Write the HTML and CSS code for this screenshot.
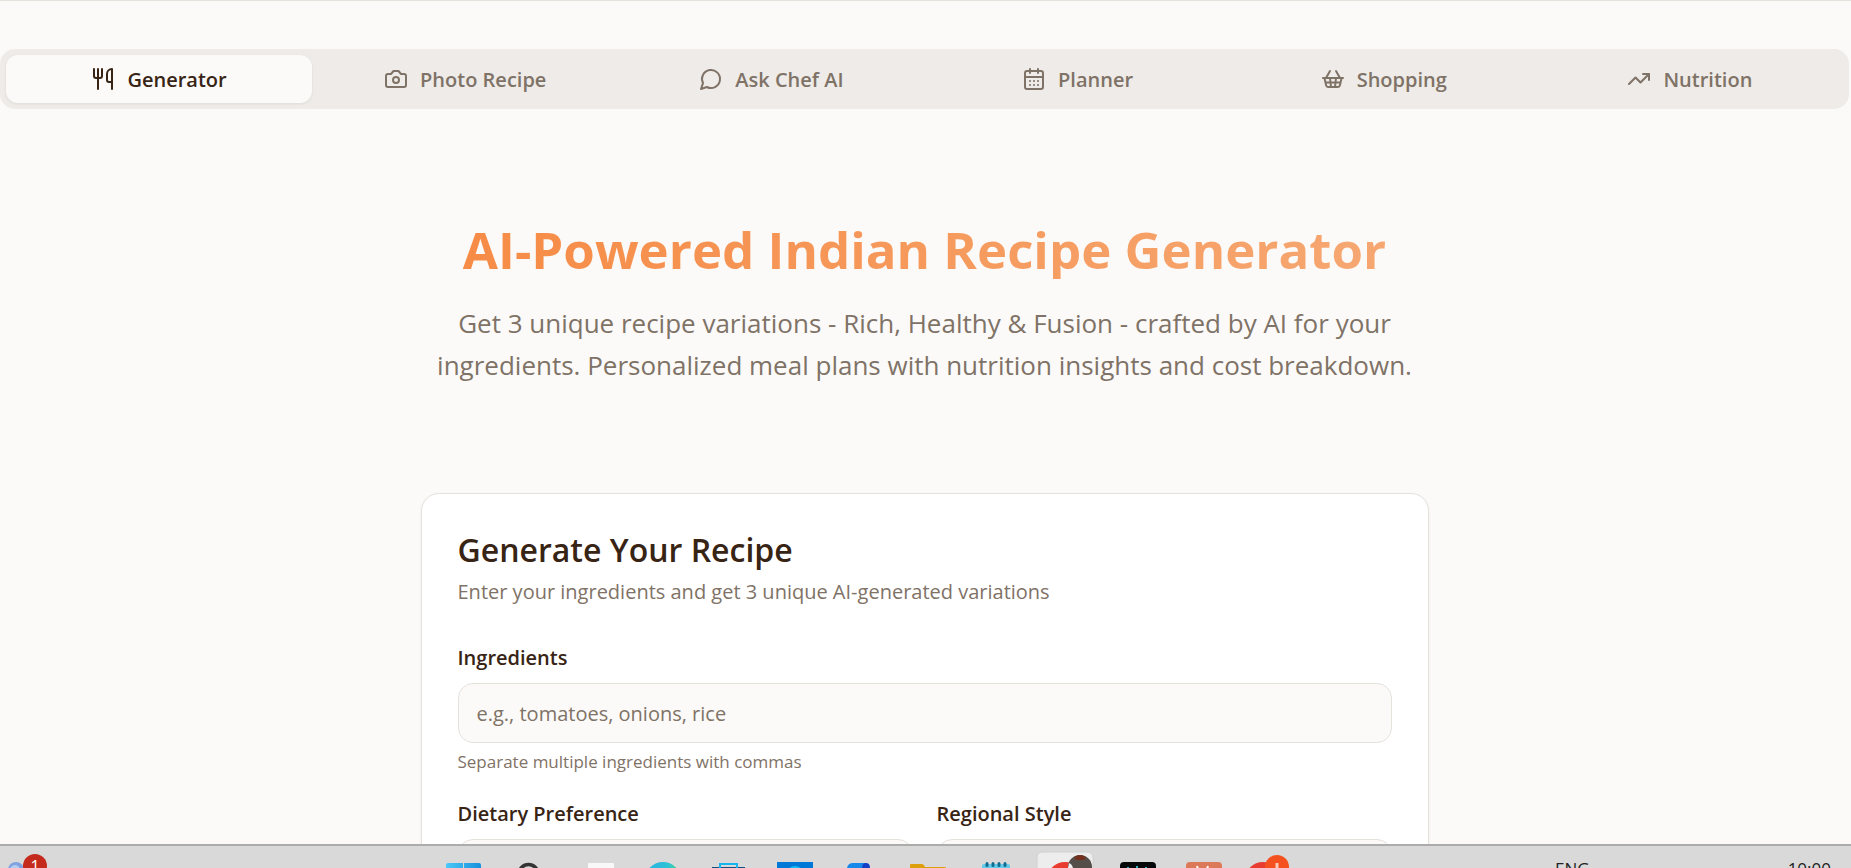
FILE: index.html
```html
<!DOCTYPE html>
<html lang="en">
  <head>
    <meta charset="utf-8">
    <title>AI-Powered Indian Recipe Generator</title>
    <link rel="stylesheet" href="styles.css">
  </head>
  <body>
    <main class="page">
      <nav class="tabs">
        <button class="tab active">
          <svg class="icon" viewBox="0 0 24 24"><path d="M3 2v7c0 1.1.9 2 2 2h4a2 2 0 0 0 2-2V2"/><path d="M7 2v20"/><path d="M21 15V2a5 5 0 0 0-5 5v6c0 1.1.9 2 2 2h3Zm0 0v7"/></svg>
          Generator
        </button>
        <button class="tab">
          <svg class="icon" viewBox="0 0 24 24"><path d="M14.5 4h-5L7 7H4a2 2 0 0 0-2 2v9a2 2 0 0 0 2 2h16a2 2 0 0 0 2-2V9a2 2 0 0 0-2-2h-3l-2.500-3z"/><circle cx="12" cy="13" r="3"/></svg>
          Photo Recipe
        </button>
        <button class="tab">
          <svg class="icon" viewBox="0 0 24 24"><path d="M7.900 20A9 9 0 1 0 4 16.100L2 22Z"/></svg>
          Ask Chef AI
        </button>
        <button class="tab">
          <svg class="icon" viewBox="0 0 24 24"><path d="M8 2v4M16 2v4"/><rect x="3" y="4" width="18" height="18" rx="2"/><path d="M3 10h18M8 14h.01M12 14h.01M16 14h.01M8 18h.01M12 18h.01M16 18h.01"/></svg>
          Planner
        </button>
        <button class="tab">
          <svg class="icon" viewBox="0 0 24 24"><path d="m15 11-1 9M19 11l-4-7M2 11h20M3.500 11l1.600 7.400a2 2 0 0 0 2 1.600h9.800a2 2 0 0 0 2-1.600l1.700-7.400M4.500 15.500h15M5 11l4-7M9 11l1 9"/></svg>
          Shopping
        </button>
        <button class="tab">
          <svg class="icon" viewBox="0 0 24 24"><path d="M22 7l-8.500 8.500-5-5L2 17"/><path d="M16 7h6v6"/></svg>
          Nutrition
        </button>
      </nav>

      <header class="hero">
        <h1>AI-Powered Indian Recipe Generator</h1>
        <p>Get 3 unique recipe variations - Rich, Healthy &amp; Fusion - crafted by AI for your ingredients. Personalized meal plans with nutrition insights and cost breakdown.</p>
      </header>

      <form class="card">
        <h2>Generate Your Recipe</h2>
        <p class="description">Enter your ingredients and get 3 unique AI-generated variations</p>

        <div class="field">
          <label for="ingredients">Ingredients</label>
          <input id="ingredients" class="control" type="text" placeholder="e.g., tomatoes, onions, rice">
          <p class="hint">Separate multiple ingredients with commas</p>
        </div>

        <div class="field-row">
          <div class="field">
            <label for="diet">Dietary Preference</label>
            <select id="diet" class="control"></select>
          </div>
          <div class="field">
            <label for="region">Regional Style</label>
            <select id="region" class="control"></select>
          </div>
        </div>
      </form>
    </main>

    <footer class="taskbar">
      <div class="widgets">
        <svg class="weather" viewBox="0 0 23 22"><circle cx="16" cy="24" r="8" fill="#7fa3e0"/><circle cx="15" cy="24" r="5" fill="#b5cdf3"/></svg>
        <span class="badge">1</span>
      </div>

      <div class="apps">
        <!-- start -->
        <svg viewBox="0 0 67 22"><defs><linearGradient id="win"><stop offset="0" stop-color="#4cc8f8"/><stop offset="1" stop-color="#1590dc"/></linearGradient></defs><path d="M16 22v-3q0-2 2-2h15v5zM34 22v-5h15q2 0 2 2v3z" fill="url(#win)"/></svg>
        <!-- search -->
        <svg viewBox="0 0 67 22"><circle cx="31.500" cy="28" r="9.500" fill="none" stroke="#333" stroke-width="3.500"/></svg>
        <!-- task view -->
        <svg viewBox="0 0 67 22"><rect x="24" y="17" width="26" height="10" rx="1" fill="#f8f8f8"/></svg>
        <!-- edge -->
        <svg viewBox="0 0 67 22"><defs><linearGradient id="edge"><stop offset=".3" stop-color="#2cb9de"/><stop offset=".65" stop-color="#2cc3d3"/><stop offset="1" stop-color="#56dd80"/></linearGradient></defs><circle cx="32" cy="34" r="18" fill="url(#edge)"/></svg>
        <!-- store -->
        <svg viewBox="0 0 67 22"><path d="M14 21h33v2H14z" fill="#12507f"/><path d="M22 22v-4h17v4" fill="none" stroke="#18b4f0" stroke-width="2"/></svg>
        <!-- camera -->
        <svg viewBox="0 0 67 22"><path d="M12 16h36v8H12z" fill="#0078d7"/><circle cx="30" cy="29" r="9" fill="#12bdf5"/></svg>
        <!-- power automate -->
        <svg viewBox="0 0 67 22"><path d="M15 22q1-5 6-5h13l-4 5z" fill="#1689ea"/><path d="M30 22q0-5 4-5t4 5z" fill="#123fc6"/></svg>
        <!-- files -->
        <svg viewBox="0 0 67 22"><path d="M11 22v-3q0-1 1-1h11q2 0 3 3h20q1 0 1 1z" fill="#dba00b"/></svg>
        <!-- notepad -->
        <svg viewBox="0 0 67 22"><path d="M16 22v-2q0-2 2-2h24q2 0 2 2v2z" fill="#63cbea"/><path d="M21 17.500v2M27 17.500v2M33 17.500v2M39 17.500v2" stroke="#136d91" stroke-width="3" stroke-linecap="round"/></svg>
        <!-- chrome -->
        <svg viewBox="0 0 67 22"><rect x="4" y="6" width="56" height="30" rx="5" fill="#ededed" stroke="#d0d0d0"/><circle cx="32" cy="34" r="18" fill="#e83c31"/><circle cx="47" cy="21" r="12" fill="#544e49"/><path d="M41 11q6-4 12 0l-2 3h-8z" fill="#74301f"/><path d="M36 17q3 1 4 5h-5z" fill="#eee"/></svg>
        <!-- terminal -->
        <svg viewBox="0 0 67 22"><rect x="20" y="16" width="36" height="20" rx="4" fill="#050808"/><path d="M28 21v2M37 20v3M46 21v2" stroke="#27b7c7" stroke-width="2"/></svg>
        <!-- assistant -->
        <svg viewBox="0 0 67 22"><rect x="19" y="16" width="36" height="20" rx="4" fill="#db7958"/><path d="M30 20l1 3M41 20l-1 3" stroke="#fff" stroke-width="2"/></svg>
        <!-- chrome, second profile -->
        <svg viewBox="0 0 67 22"><circle cx="29" cy="34" r="18" fill="#e83c31"/><circle cx="43" cy="21" r="12" fill="#f4511e"/><path d="M43 17v5" stroke="#fbc9b8" stroke-width="3"/></svg>
      </div>

      <div class="tray">
        <span>ENG</span>
        <time>10:00</time>
      </div>
    </footer>
  </body>
</html>
```

FILE: styles.css
```css
* {
  box-sizing: border-box;
}

body {
  margin: 0;
  height: 100vh;
  display: flex;
  flex-direction: column;
  overflow: hidden;
  background-color: #fbfaf8;
  color: #382414;
  font-family: "Open Sans", "Noto Sans", sans-serif;
  font-size: 20px;
}

h1, h2, p {
  margin: 0;
}

.page {
  flex: 1;
  min-height: 0;
  overflow: hidden;
  border-top: 1px solid #e5e2dc;
  padding-top: 48px;
  padding-right: 2px;
}

/* tabs */
.tabs {
  display: grid;
  grid-template-columns: repeat(6, 1fr);
  padding: 6px;
  background-color: #eeebe8;
  border-radius: 15px;
}

.tab {
  display: flex;
  align-items: center;
  justify-content: center;
  gap: 12px;
  height: 48px;
  border: 0;
  border-radius: 12px;
  background: none;
  color: #7f7266;
  font: inherit;
  font-weight: 600;
}

.tab.active {
  background-color: #fbfaf8;
  color: #382414;
  box-shadow: 0 1px 3px rgba(56, 36, 20, 0.08);
}

.icon {
  width: 24px;
  height: 24px;
  fill: none;
  stroke: currentColor;
  stroke-width: 2;
  stroke-linecap: round;
  stroke-linejoin: round;
}

/* hero */
.hero {
  max-width: 1008px;
  margin: 0 auto;
  padding: 110px 16px 107px;
  text-align: center;
}

.hero h1 {
  margin-bottom: 23px;
  font-size: 51px;
  line-height: 60px;
  background: linear-gradient(90deg, #f68b45, #f6a873);
  -webkit-background-clip: text;
  background-clip: text;
  color: transparent;
}

.hero p {
  font-size: 26px;
  line-height: 42px;
  color: #7f7266;
}

/* recipe form */
.card {
  max-width: 1008px;
  margin: 0 auto;
  padding: 38px 36px 36px;
  background-color: #fff;
  border: 1px solid #e5e2dc;
  border-radius: 18px;
  box-shadow: 0 1px 3px rgba(56, 36, 20, 0.06);
}

.card h2 {
  font-size: 32px;
  font-weight: 600;
  line-height: 36px;
}

.description {
  margin: 9px 0 36px;
  line-height: 30px;
  color: #7f7266;
}

.field label {
  display: block;
  margin-bottom: 10px;
  font-weight: 600;
  line-height: 30px;
}

.control {
  display: block;
  width: 100%;
  height: 60px;
  padding: 0 18px;
  border: 1px solid #e5e2dc;
  border-radius: 15px;
  background-color: #fbfaf8;
  color: #382414;
  font: inherit;
  appearance: none;
}

.control::placeholder {
  color: #7f7266;
}

.hint {
  margin-top: 7px;
  font-size: 17px;
  line-height: 24px;
  color: #7f7266;
}

.field-row {
  display: grid;
  grid-template-columns: 1fr 1fr;
  gap: 24px;
  margin-top: 25px;
}

/* taskbar */
.taskbar {
  flex: none;
  display: grid;
  grid-template-columns: 430px 1fr auto;
  height: 24px;
  overflow: hidden;
  border-top: 2px solid #acacac;
  background-color: #d9d9d9;
  color: #222;
}

.widgets {
  display: flex;
}

.weather {
  width: 23px;
  height: 22px;
}

.badge {
  width: 24px;
  height: 24px;
  margin-top: 8px;
  border-radius: 50%;
  background-color: #c42b1c;
  color: #fff;
  font-size: 16px;
  line-height: 24px;
  text-align: center;
}

.apps {
  display: flex;
}

.apps svg {
  width: 67px;
  height: 22px;
}

.tray {
  display: flex;
  justify-content: space-between;
  width: 296px;
  padding: 12px 20px 0 0;
  font-size: 17px;
  line-height: 22px;
}
```
